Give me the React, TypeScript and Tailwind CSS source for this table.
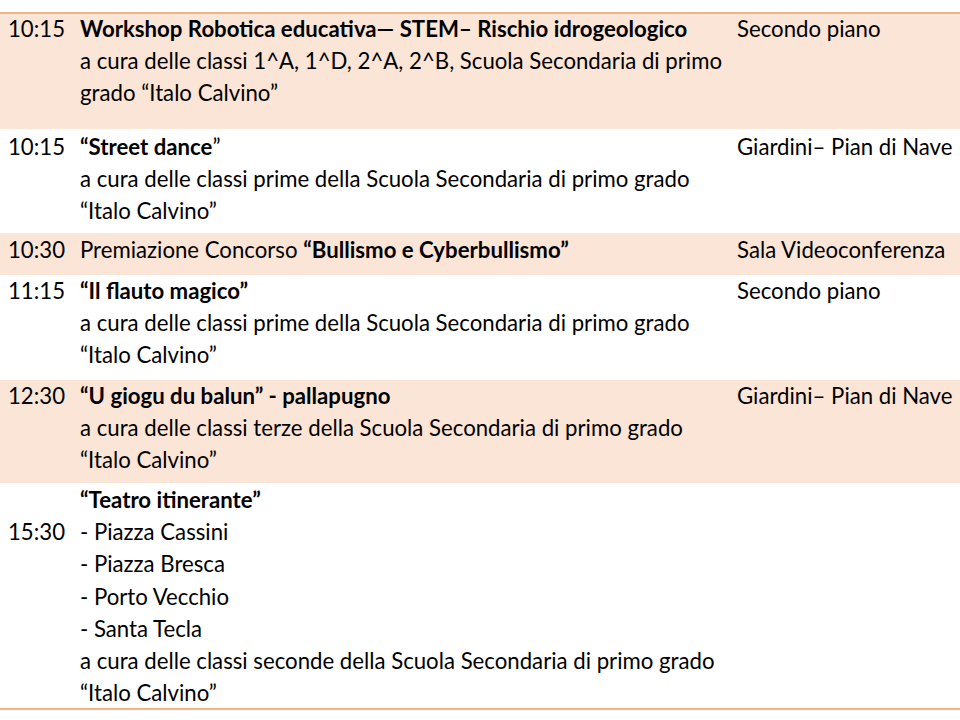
const rows = [
    {
        time: ["10:15"],
        lines: [
            <b>Workshop Robotica educativa— STEM– Rischio idrogeologico</b>,
            "a cura delle classi 1^A, 1^D, 2^A, 2^B, Scuola Secondaria di primo",
            "grado “Italo Calvino”",
        ],
        place: "Secondo piano",
        shaded: true,
        h: "h-[115px]",
        pad: "-mt-[1px]",
    },
    {
        time: ["10:15"],
        lines: [
            <><b>“Street dance</b>”</>,
            "a cura delle classi prime della Scuola Secondaria di primo grado",
            "“Italo Calvino”",
        ],
        place: "Giardini– Pian di Nave",
        shaded: false,
        h: "h-[104px]",
        pad: "pt-[2px]",
    },
    {
        time: ["10:30"],
        lines: [<>Premiazione Concorso <b>“Bullismo e Cyberbullismo”</b></>],
        place: "Sala Videoconferenza",
        shaded: true,
        h: "h-[42px]",
        pad: "pt-[1px]",
    },
    {
        time: ["11:15"],
        lines: [
            <b>“Il flauto magico”</b>,
            "a cura delle classi prime della Scuola Secondaria di primo grado",
            "“Italo Calvino”",
        ],
        place: "Secondo piano",
        shaded: false,
        h: "h-[105px]",
        pad: "pt-0",
    },
    {
        time: ["12:30"],
        lines: [
            <b>“U giogu du balun” - pallapugno</b>,
            "a cura delle classi terze della Scuola Secondaria di primo grado",
            "“Italo Calvino”",
        ],
        place: "Giardini– Pian di Nave",
        shaded: true,
        h: "h-[103px]",
        pad: "pt-0",
    },
    {
        time: ["\u00a0", "15:30"],
        lines: [
            <b>“Teatro itinerante”</b>,
            "- Piazza Cassini",
            "- Piazza Bresca",
            "- Porto Vecchio",
            "- Santa Tecla",
            "a cura delle classi seconde della Scuola Secondaria di primo grado",
            "“Italo Calvino”",
        ],
        place: "",
        shaded: false,
        h: "h-[225px]",
        pad: "pt-[1px]",
    },
]

export default function App() {
    return (
        <div className="w-[960px] h-[720px] bg-white text-black text-[22.2px] leading-[32.2px] font-['Lato',sans-serif] pt-3">
            <div className="border-t-2 border-b-2 border-[#f4b183]">
                {rows.map((row, i) => (
                    <div key={i} className={`flex overflow-hidden ${row.h} ${row.shaded ? "bg-[#fbe5d6]" : "bg-white"}`}>
                        <div className={`flex w-full ${row.pad}`}>
                            <div className="w-[80px] pl-2 shrink-0">
                                {row.time.map((t, j) => <div key={j}>{t}</div>)}
                            </div>
                            <div className="w-[657px] shrink-0 whitespace-nowrap">
                                {row.lines.map((l, j) => <div key={j}>{l}</div>)}
                            </div>
                            <div className="flex-1 whitespace-nowrap">{row.place}</div>
                        </div>
                    </div>
                ))}
            </div>
        </div>
    )
}
